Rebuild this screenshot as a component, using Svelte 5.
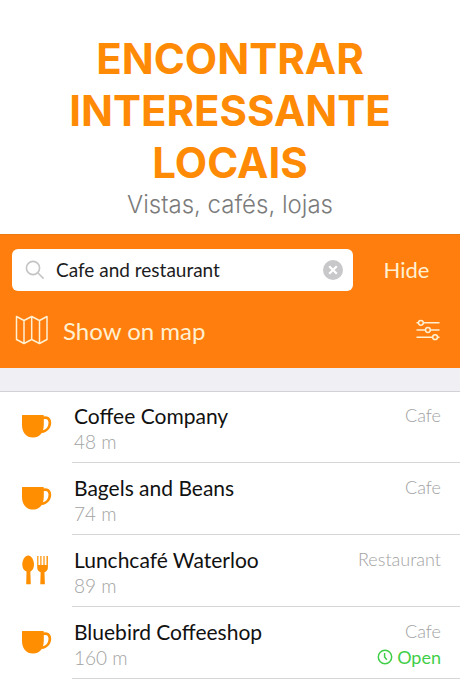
<script>
  let query = "Cafe and restaurant";

  const places = [
    { name: "Coffee Company", distance: "48 m", type: "Cafe", icon: "cup" },
    { name: "Bagels and Beans", distance: "74 m", type: "Cafe", icon: "cup" },
    {
      name: "Lunchcafé Waterloo",
      distance: "89 m",
      type: "Restaurant",
      icon: "cutlery",
    },
    {
      name: "Bluebird Coffeeshop",
      distance: "160 m",
      type: "Cafe",
      icon: "cup",
      open: true,
    },
  ];

  function clearQuery() {
    query = "";
  }
</script>

<header class="intro">
  <h1>ENCONTRAR INTERESSANTE LOCAIS</h1>
  <p>Vistas, cafés, lojas</p>
</header>

<section class="toolbar">
  <form class="search-row" on:submit|preventDefault>
    <div class="search-box">
      <svg class="search-icon" viewBox="0 0 20 20" aria-hidden="true">
        <circle cx="8" cy="8" r="6.6" />
        <path d="M12.8 12.8L18.6 18.6" />
      </svg>
      <input type="text" aria-label="Search places" bind:value={query} />
      <button
        type="button"
        class="clear"
        aria-label="Clear search"
        on:click={clearQuery}
      >
        <svg viewBox="0 0 20 20" aria-hidden="true">
          <circle cx="10" cy="10" r="10" />
          <path d="M6.2 6.2L13.8 13.8M13.8 6.2L6.2 13.8" />
        </svg>
      </button>
    </div>
    <button type="button" class="hide">Hide</button>
  </form>

  <div class="map-row">
    <button type="button" class="show-map">
      <svg viewBox="0 0 34 30" aria-hidden="true">
        <path
          d="M1.5 1.5L9 5.5L16.7 1.5L24.5 5.5L32 1.5V24.5L24.5 28.5L16.7 24.5L9 28.5L1.5 24.5ZM9 5.5V28.5M16.7 1.5V24.5M24.5 5.5V28.5"
        />
      </svg>
      <span>Show on map</span>
    </button>
    <button type="button" class="filters" aria-label="Filters">
      <svg viewBox="0 0 24 22" aria-hidden="true">
        <path
          d="M0.5 3.8H2.5M7.3 3.8H23.5M0.5 11H9.5M14.3 11H23.5M0.5 18.2H16.7M21.5 18.2H23.5"
        />
        <circle cx="4.9" cy="3.8" r="2.4" />
        <circle cx="11.9" cy="11" r="2.4" />
        <circle cx="19.1" cy="18.2" r="2.4" />
      </svg>
    </button>
  </div>
</section>

<ul class="places">
  {#each places as place}
    <li>
      <div class="place-icon">
        {#if place.icon === "cup"}
          <svg viewBox="0 0 30 30" aria-hidden="true">
            <path
              d="M0.6 4H21.2Q21.8 4 21.8 5.4C26.4 4.4 29.4 7.400 29.200 12C29 17.600 25 21.400 19.800 22C17.600 25.200 14.600 26.600 11 26.600C4.200 26.600 0 21.400 0 14V4.600Q0 4 0.600 4ZM21.8 8.200V13C21.8 15.500 21.500 17.600 20.900 19.300C24.500 18.400 26.400 15.600 26.500 12C26.600 8.800 24.800 7.200 21.8 8.200Z"
              fill-rule="evenodd"
            />
          </svg>
        {:else}
          <svg viewBox="0 0 30 30" aria-hidden="true">
            <path
              d="M6.200 0.500C9.500 0.500 12 5 12 9.500C12 13 10.600 15.500 8.400 16.600V18.300L8.800 29.200H4.200L4.500 18.300V16.600C1.800 15.500 0.300 13 0.300 9.500C0.300 5 2.900 0.500 6.200 0.500Z"
            />
            <path
              d="M15.200 0.900H16.400V10H18.300V0.900H19.500V10H21.400V0.900H22.600V10H24.500V0.900H25.900V12.500C25.900 15 24.600 16.500 22.500 17.200V18.300L22.900 29.200H18.300L18.600 18.300V17.200C16.500 16.500 15.200 15 15.200 12.500Z"
            />
          </svg>
        {/if}
      </div>
      <div class="place-body">
        <div class="line">
          <span class="name">{place.name}</span>
          <span class="type">{place.type}</span>
        </div>
        <div class="line">
          <span class="distance">{place.distance}</span>
          {#if place.open}
            <span class="open">
              <svg viewBox="0 0 16 16" aria-hidden="true">
                <circle cx="8" cy="8" r="6.700" />
                <path d="M7.600 4V8L9.800 10.800" />
              </svg>
              Open
            </span>
          {/if}
        </div>
      </div>
    </li>
  {/each}
</ul>

<style>
  :global(body) {
    background: #fff;
    font-family: Lato, "Open Sans", sans-serif;
  }

  svg {
    display: block;
    flex-shrink: 0;
  }

  button {
    padding: 0;
    border: none;
    background: none;
    color: inherit;
    font: inherit;
    cursor: pointer;
  }

  .intro {
    padding: 33px 60px 13px;
    text-align: center;
    font-family: Inter, "Liberation Sans", sans-serif;
  }

  h1 {
    margin: 0;
    color: #ff8a05;
    font-size: 42px;
    font-weight: 700;
    line-height: 52px;
  }

  .intro p {
    margin: 0;
    color: #7b7b7b;
    font-size: 24px;
    font-weight: 300;
    line-height: 32px;
  }

  .toolbar {
    padding: 14px 20px 18px 12px;
    border-top: 1px solid #ec7a12;
    background: #ff7e0d;
    color: #fff0d2;
  }

  .search-row {
    display: flex;
    align-items: center;
  }

  .search-box {
    display: flex;
    flex: 1;
    align-items: center;
    min-width: 0;
    height: 42px;
    padding: 0 10px 0 13px;
    border-radius: 6px;
    background: #fff;
  }

  .search-icon {
    width: 20px;
    height: 20px;
    fill: none;
    stroke: #c4c4c6;
    stroke-width: 1.6;
  }

  input {
    flex: 1;
    min-width: 0;
    margin-left: 11px;
    padding: 0;
    border: none;
    outline: none;
    background: none;
    color: #1c1c1e;
    font: inherit;
    font-size: 19px;
    line-height: 24px;
  }

  .clear svg {
    width: 20px;
    height: 20px;
    fill: #c8c8ca;
  }

  .clear path {
    stroke: #fff;
    stroke-width: 2.2;
  }

  .hide {
    width: 87px;
    padding-left: 20px;
    font-size: 22px;
    line-height: 28px;
  }

  .map-row {
    display: flex;
    align-items: center;
    justify-content: space-between;
    padding: 19px 0 0 3px;
  }

  .show-map {
    display: flex;
    align-items: center;
    gap: 14px;
    height: 40px;
    font-size: 24px;
  }

  .show-map svg {
    width: 34px;
    height: 30px;
    fill: none;
    stroke: currentColor;
    stroke-width: 1.5;
    stroke-linejoin: round;
  }

  .filters svg {
    width: 24px;
    height: 22px;
    fill: none;
    stroke: currentColor;
    stroke-width: 1.5;
  }

  .places {
    margin: 0;
    padding: 0;
    border-top: 23px solid #efeff4;
    list-style: none;
    box-shadow: inset 0 1px #d2d2d6;
  }

  li {
    display: flex;
    padding-left: 22px;
  }

  .place-icon {
    display: flex;
    align-items: center;
    width: 50px;
    padding-bottom: 2px;
  }

  .place-icon svg {
    width: 30px;
    height: 30px;
    fill: #ff8f00;
  }

  .place-body {
    flex: 1;
    min-width: 0;
    padding: 11px 19px 8px 2px;
    border-bottom: 1px solid #d6d6d8;
  }

  .line {
    display: flex;
    align-items: center;
    justify-content: space-between;
    height: 26px;
  }

  .name {
    color: #111;
    font-size: 21px;
  }

  .type,
  .distance,
  .open {
    color: #a2a2a2;
    font-size: 18px;
    font-weight: 300;
  }

  .distance {
    font-size: 19px;
  }

  .open {
    display: flex;
    align-items: center;
    gap: 4px;
    color: #3fce48;
    font-weight: 400;
  }

  .open svg {
    width: 16px;
    height: 16px;
    fill: none;
    stroke: currentColor;
    stroke-width: 1.5;
  }
</style>
